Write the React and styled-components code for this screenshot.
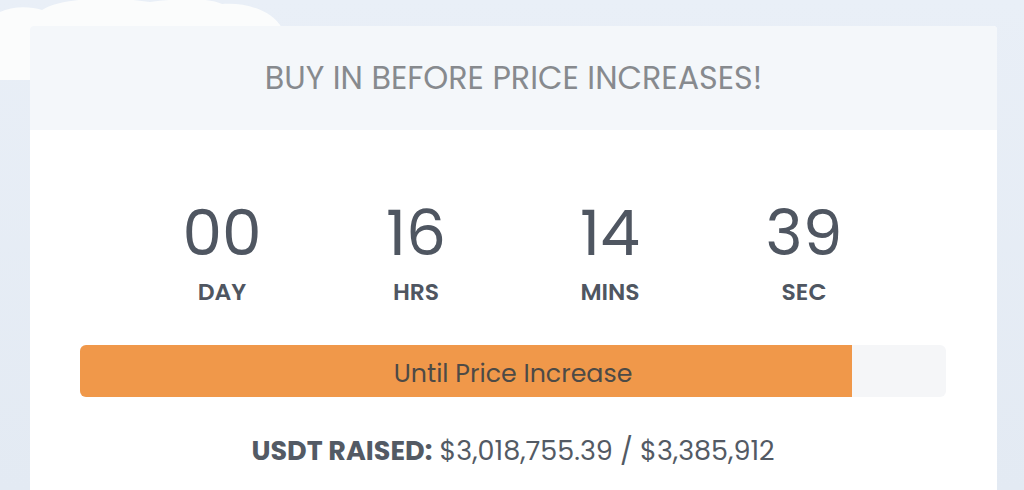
import styled, { createGlobalStyle } from "styled-components";

const GlobalStyle = createGlobalStyle`
  html, body {
    margin: 0;
    padding: 0;
    background: #e7eef6;
    font-family: "Poppins", "Inter", "Noto Sans", sans-serif;
    overflow: hidden;
  }
`;

const Page = styled.div`
  position: relative;
  width: 1024px;
  height: 490px;
  padding: 26px 27px 0 30px;
  box-sizing: border-box;
  background: linear-gradient(180deg, #e9eff7 0%, #e3eaf3 100%);
  overflow: hidden;
`;

const Clouds = styled.svg`
  position: absolute;
  left: 0;
  top: 0;
  width: 300px;
  height: 80px;
`;

const Card = styled.div`
  position: relative;
  background: #ffffff;
  border-radius: 4px 4px 0 0;
  height: 500px;
`;

const Header = styled.div`
  height: 104px;
  background: #f4f7fa;
  display: flex;
  align-items: center;
  justify-content: center;
  font-size: 31.8px;
  font-weight: 400;
  color: #878a8e;
  border-radius: 4px 4px 0 0;
`;

const Body = styled.div`
  padding: 72px 51px 0 50px;
  display: flex;
  flex-direction: column;
  align-items: center;
`;

const Countdown = styled.div`
  display: flex;
  justify-content: center;
`;

const Unit = styled.div`
  width: 194px;
  display: flex;
  flex-direction: column;
  align-items: center;
  color: #4f5661;
`;

const Value = styled.div`
  font-size: 63px;
  font-weight: 400;
  line-height: 1;
`;

const Label = styled.div`
  margin-top: 15px;
  font-size: 23.5px;
  font-weight: 600;
  line-height: 1;
`;

const Bar = styled.div`
  position: relative;
  align-self: stretch;
  margin-top: 41px;
  height: 52px;
  border-radius: 6px;
  background: #f5f6f8;
  overflow: hidden;
  display: flex;
  align-items: center;
  justify-content: center;
`;

const Fill = styled.div`
  position: absolute;
  left: 0;
  top: 0;
  bottom: 0;
  background: #f0984a;
`;

const BarText = styled.span`
  position: relative;
  padding-top: 6px;
  font-size: 25.3px;
  color: #4d4a46;
`;

const Raised = styled.div`
  margin-top: 34px;
  font-size: 27px;
  color: #535a64;
`;

const RaisedLabel = styled.b`
  font-weight: 700;
`;

const units = [
  { value: "00", label: "DAY" },
  { value: "16", label: "HRS" },
  { value: "14", label: "MINS" },
  { value: "39", label: "SEC" },
];

const App = () => {
  const progress = 3018755.39 / 3385912;
  return (
    <Page>
      <GlobalStyle />
      <Clouds viewBox="0 0 300 80">
        <path
          d="M0 64 L0 12 C12 6 30 6 42 10 C60 -2 110 -4 150 2 C180 -2 210 -2 222 4 C245 2 272 10 282 28 L282 80 L0 80 Z"
          fill="#fbfcfc"
        />
      </Clouds>
      <Card>
        <Header>BUY IN BEFORE PRICE INCREASES!</Header>
        <Body>
          <Countdown>
            {units.map((u) => (
              <Unit key={u.label}>
                <Value>{u.value}</Value>
                <Label>{u.label}</Label>
              </Unit>
            ))}
          </Countdown>
          <Bar>
            <Fill style={{ width: `${progress * 100}%` }} />
            <BarText>Until Price Increase</BarText>
          </Bar>
          <Raised>
            <RaisedLabel>USDT RAISED:</RaisedLabel> $3,018,755.39 / $3,385,912
          </Raised>
        </Body>
      </Card>
    </Page>
  );
};

export default App;
